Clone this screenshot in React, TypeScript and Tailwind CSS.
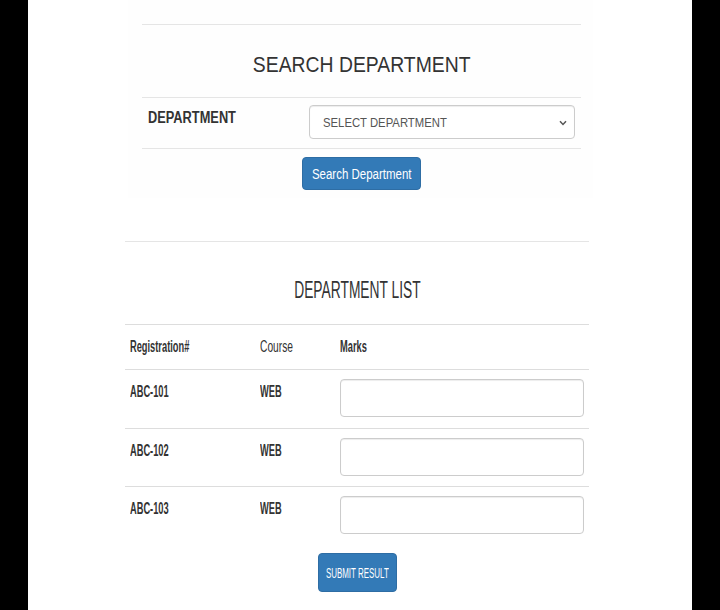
const students = [
  { reg: 'ABC-101', course: 'WEB', height: 'h-[59px]' },
  { reg: 'ABC-102', course: 'WEB', height: 'h-[58px]' },
  { reg: 'ABC-103', course: 'WEB', height: 'h-[58px]' },
];

export default function App() {
  return (
    <div className="flex h-[610px] w-[720px] bg-black px-[28px] font-['Liberation_Sans',Arial,sans-serif] text-[#333]">
      <div className="flex-1 bg-white">
        {/* search card */}
        <div className="ml-[100px] w-[465px] bg-[#fefefe] pb-[8px] pl-[14px] pr-[12px] pt-[24px]">
          <div className="flex h-[73px] items-center justify-center border-t border-[#e5e5e5] pt-[8px]">
            <h2 className="inline-block scale-x-[0.88] whitespace-nowrap text-[22px] leading-none">SEARCH DEPARTMENT</h2>
          </div>
          <div className="flex items-start border-y border-[#e5e5e5] pb-[9px] pt-[7px]">
            <div className="w-[167px] pl-[6px] pt-[1px]">
              <span className="inline-block origin-left scale-x-[0.8] whitespace-nowrap text-[16px] font-bold leading-none">
                DEPARTMENT
              </span>
            </div>
            <div className="relative flex h-[34px] w-[266px] items-center rounded-[4px] border border-[#ccc] bg-white pl-[13px] shadow-[inset_0_1px_1px_rgba(0,0,0,0.075)]">
              <span className="inline-block origin-left scale-x-[0.87] whitespace-nowrap text-[13px] leading-none text-[#555]">
                SELECT DEPARTMENT
              </span>
              <svg
                className="absolute right-[7px] top-[14px]"
                width="8"
                height="6"
                viewBox="0 0 8 6"
                fill="none"
                stroke="#555"
                strokeWidth="1.5"
              >
                <path d="M1 1.2 L4 4.4 L7 1.2" />
              </svg>
            </div>
          </div>
          <div className="mt-[8px] flex justify-center">
            <button className="flex h-[33px] w-[119px] items-center justify-center rounded-[4px] border border-[#2e6da4] bg-[#337ab7] text-white">
              <span className="inline-block scale-x-[0.82] whitespace-nowrap text-[14px] leading-none">Search Department</span>
            </button>
          </div>
        </div>

        {/* department list */}
        <div className="ml-[97px] mt-[43px] w-[464px]">
          <div className="flex h-[83px] items-center justify-center border-t border-[#e5e5e5] pt-[14px]">
            <h2 className="inline-block scale-x-[0.6] whitespace-nowrap text-[23px] leading-none">DEPARTMENT LIST</h2>
          </div>
          <div className="flex h-[45px] items-center border-t border-[#ddd] text-[16px] leading-none">
            <div className="w-[135px] pl-[5px]">
              <span className="inline-block origin-left scale-x-[0.58] whitespace-nowrap font-bold">Registration#</span>
            </div>
            <div className="w-[80px]">
              <span className="inline-block origin-left scale-x-[0.64] whitespace-nowrap">Course</span>
            </div>
            <div className="flex-1">
              <span className="inline-block origin-left scale-x-[0.58] whitespace-nowrap font-bold">Marks</span>
            </div>
          </div>
          {students.map(s => (
            <div key={s.reg} className={`flex items-start border-t border-[#ddd] text-[16px] leading-none last:border-b ${s.height}`}>
              <div className="w-[135px] pl-[5px] pt-[14px]">
                <span className="inline-block origin-left scale-x-[0.58] whitespace-nowrap font-bold">{s.reg}</span>
              </div>
              <div className="w-[80px] pt-[14px]">
                <span className="inline-block origin-left scale-x-[0.58] whitespace-nowrap font-bold">{s.course}</span>
              </div>
              <div className="flex-1 pr-[5px] pt-[9px]">
                <input className="h-[38px] w-full rounded-[4px] border border-[#ccc] bg-white px-3 shadow-[inset_0_1px_1px_rgba(0,0,0,0.075)] outline-none" />
              </div>
            </div>
          ))}
          <div className="mt-[9px] flex justify-center">
            <button className="flex h-[39px] w-[79px] items-center justify-center rounded-[4px] border border-[#2e6da4] bg-[#337ab7] text-white">
              <span className="inline-block scale-x-[0.53] whitespace-nowrap text-[15px] leading-none">SUBMIT RESULT</span>
            </button>
          </div>
        </div>
      </div>
    </div>
  );
}
